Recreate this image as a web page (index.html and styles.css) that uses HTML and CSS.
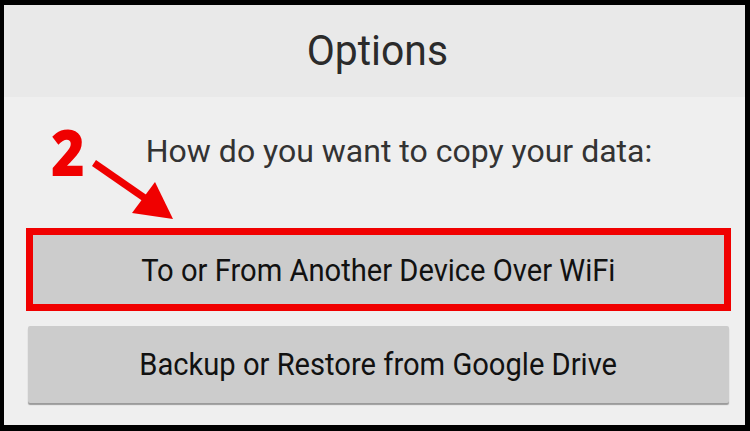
FILE: index.html
```html
<!DOCTYPE html>
<html>
<head>
<meta charset="utf-8">
<link rel="stylesheet" href="styles.css">
</head>
<body>
<div class="frame">
  <div class="header"><span class="title">Options</span></div>
  <div class="content">
    <div class="question"><span class="plain">How do you want to copy your data:</span></div>
    <div class="highlight">
      <div class="btn btn-inner"><span class="squeeze">To or From Another Device Over WiFi</span></div>
    </div>
    <div class="btn btn-second"><span class="squeeze">Backup or Restore from Google Drive</span></div>
  </div>
</div>
<div class="step">2</div>
<svg class="arrow" width="200" height="240" viewBox="0 0 200 240">
  <line x1="94" y1="163" x2="146" y2="199" stroke="#f00000" stroke-width="7" stroke-linecap="butt"/>
  <polygon points="132,213 173,219 155,182" fill="#f00000"/>
</svg>
</body>
</html>
```
FILE: styles.css
```css
html, body {
  margin: 0;
  padding: 0;
  background: #000;
}
body {
  position: relative;
  width: 750px;
  height: 431px;
  overflow: hidden;
}
.frame {
  box-sizing: border-box;
  width: 750px;
  height: 431px;
  border-style: solid;
  border-color: #000;
  border-width: 5px 5px 6px 4px;
  background: #efefef;
  display: flex;
  flex-direction: column;
}
.header {
  height: 92px;
  flex-shrink: 0;
  background: #e9e9e9;
  display: flex;
  justify-content: center;
  padding-left: 6px;
  box-sizing: border-box;
}
.title {
  display: inline-block;
  font-family: Roboto, "Liberation Sans", sans-serif;
  font-size: 43px;
  color: #2b2b2b;
  line-height: 1;
  margin-top: 24px;
  transform: scaleX(0.95);
}
.squeeze {
  display: inline-block;
  transform: scaleX(0.94);
  white-space: nowrap;
}
.plain {
  white-space: nowrap;
}
.content {
  display: flex;
  flex-direction: column;
}
.question {
  font-family: Roboto, "Liberation Sans", sans-serif;
  font-size: 32px;
  color: #333;
  line-height: 1;
  display: flex;
  justify-content: center;
  padding-left: 49px;
  margin-top: 38px;
}
.highlight {
  flex-shrink: 0;
  margin-top: 61px;
  margin-left: 22px;
  width: 705px;
  height: 83px;
  box-sizing: border-box;
  border: 7px solid #f00000;
  display: flex;
}
.btn {
  background: #cccccc;
  display: flex;
  align-items: center;
  justify-content: center;
  font-family: Roboto, "Liberation Sans", sans-serif;
  font-size: 31px;
  color: #111;
}
.btn-inner {
  flex: 1;
  padding-top: 2px;
  box-sizing: border-box;
}
.btn-second {
  flex-shrink: 0;
  margin-top: 15px;
  margin-left: 24px;
  width: 701px;
  height: 77px;
  box-shadow: 0 2px 1px rgba(0,0,0,0.35);
  border-radius: 2px;
}
.step {
  position: absolute;
  left: 49px;
  top: 120px;
  font-family: "Open Sans", "Liberation Sans", sans-serif;
  font-weight: 800;
  font-size: 64px;
  line-height: 1;
  color: #f00000;
  transform: scaleX(0.9);
}
.arrow {
  position: absolute;
  left: 0;
  top: 0;
}
```
